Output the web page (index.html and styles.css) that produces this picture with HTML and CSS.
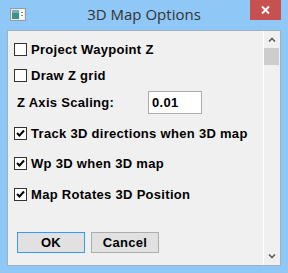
FILE: index.html
```html
<!DOCTYPE html>
<html lang="en">
<head>
    <meta charset="UTF-8">
    <title>3D Map Options</title>
    <link rel="stylesheet" href="styles.css">
</head>
<body>

    <div class="window">
        <div class="titlebar">
            <svg class="app-icon" width="16" height="13" viewBox="0 0 16 13">
                <rect x="0.5" y="0.5" width="15" height="12" fill="#e8eef0" stroke="#9a9a9a"/>
                <rect x="2" y="2" width="7" height="9" fill="#3f8f82"/>
                <rect x="2" y="2" width="7" height="3" fill="#6fb0c8"/>
                <rect x="10" y="2" width="4" height="9" fill="#f8f8f8"/>
                <rect x="11" y="4" width="2" height="1" fill="#8a8a8a"/>
                <rect x="11" y="7" width="2" height="1" fill="#8a8a8a"/>
            </svg>
            <span class="title">3D Map Options</span>
            <div class="close-button">
                <svg width="9" height="8" viewBox="0 0 9 8">
                    <path d="M1 0.5 L8 7.5 M8 0.5 L1 7.5" stroke="#fff" stroke-width="2"/>
                </svg>
            </div>
        </div>

        <div class="client">
            <div class="options">
                <label class="check-row row-1"><span class="box"></span>Project Waypoint Z</label>
                <label class="check-row row-2"><span class="box"></span>Draw Z grid</label>
                <div class="scale-row">
                    <span class="scale-label">Z Axis Scaling:</span>
                    <input class="scale-input" type="text" value="0.01">
                </div>
                <label class="check-row row-4"><span class="box checked"><svg width="11" height="11" viewBox="0 0 11 11"><path d="M2 5 L4.5 7.5 L9 2.5" fill="none" stroke="#000" stroke-width="2"/></svg></span>Track 3D directions when 3D map</label>
                <label class="check-row row-5"><span class="box checked"><svg width="11" height="11" viewBox="0 0 11 11"><path d="M2 5 L4.5 7.5 L9 2.5" fill="none" stroke="#000" stroke-width="2"/></svg></span>Wp 3D when 3D map</label>
                <label class="check-row row-6"><span class="box checked"><svg width="11" height="11" viewBox="0 0 11 11"><path d="M2 5 L4.5 7.5 L9 2.5" fill="none" stroke="#000" stroke-width="2"/></svg></span>Map Rotates 3D Position</label>

                <div class="buttons">
                    <button class="btn btn-default">OK</button>
                    <button class="btn">Cancel</button>
                </div>
            </div>

            <div class="scrollbar">
                <div class="arrow">
                    <svg width="8" height="5" viewBox="0 0 8 5"><path d="M1 4.5 L4 1.5 L7 4.5" fill="none" stroke="#606060" stroke-width="1.6"/></svg>
                </div>
                <div class="thumb"></div>
                <div class="track"></div>
                <div class="arrow">
                    <svg width="8" height="5" viewBox="0 0 8 5"><path d="M1 0.5 L4 3.5 L7 0.5" fill="none" stroke="#606060" stroke-width="1.6"/></svg>
                </div>
            </div>
        </div>
    </div>

</body>
</html>
```

FILE: styles.css
```css
body {
    margin: 0;
    width: 288px;
    height: 273px;
    background-color: #8fc7f7;
    font-family: "Liberation Sans", Arial, sans-serif;
}

.window {
    width: 288px;
    height: 273px;
}

.titlebar {
    height: 30px;
    display: grid;
    grid-template-columns: 1fr auto 1fr;
}

.app-icon {
    margin: 8px 0 0 10px;
}

.title {
    font-family: "Open Sans", sans-serif;
    font-size: 15px;
    color: #333;
    line-height: 28px;
}

.close-button {
    justify-self: end;
    width: 31px;
    height: 20px;
    margin-right: 7px;
    background-color: #c75050;
    display: flex;
    align-items: center;
    justify-content: center;
}

.client {
    margin: 0 7px;
    height: 234px;
    border: 1px solid #a3b1bf;
    background-color: #f0f0f0;
    display: flex;
}

.options {
    width: 255px;
    padding-top: 6px;
    font-size: 13px;
    font-weight: bold;
    letter-spacing: 0.3px;
    color: #000;
}

.check-row {
    height: 25px;
    padding-left: 6px;
    display: flex;
    align-items: center;
}

.row-2 { margin-top: 1px; }
.row-4 { margin-top: 7px; }
.row-5 { margin-top: 5px; }
.row-6 { margin-top: 6px; }

.box {
    width: 11px;
    height: 11px;
    border: 1px solid #333;
    background-color: #fff;
    margin-right: 4px;
    display: flex;
}

.scale-row {
    margin-top: 3px;
    height: 23px;
    padding-left: 9px;
    display: flex;
    align-items: center;
}

.scale-label {
    width: 131px;
}

.scale-input {
    width: 49px;
    height: 21px;
    box-sizing: content-box;
    padding: 0 0 0 3px;
    border: 1px solid #abadb3;
    background-color: #fff;
    font-family: "Liberation Sans", Arial, sans-serif;
    font-size: 13px;
    font-weight: bold;
    letter-spacing: 0.3px;
    color: #000;
}

.buttons {
    margin-top: 25px;
    padding-left: 9px;
    display: flex;
    gap: 6px;
}

.btn {
    width: 68px;
    height: 21px;
    border: 1px solid #adadad;
    background-color: #e1e1e1;
    font-family: "Liberation Sans", Arial, sans-serif;
    font-size: 13px;
    font-weight: bold;
    letter-spacing: 0.3px;
    color: #000;
    padding: 0;
}

.btn-default {
    border-color: #3399ff;
}

.scrollbar {
    width: 16px;
    border-left: 1px solid #fff;
    display: flex;
    flex-direction: column;
}

.arrow {
    height: 17px;
    display: flex;
    align-items: center;
    justify-content: center;
}

.thumb {
    width: 15px;
    height: 17px;
    background-color: #cdcdcd;
}

.track {
    flex: 1;
}
```
